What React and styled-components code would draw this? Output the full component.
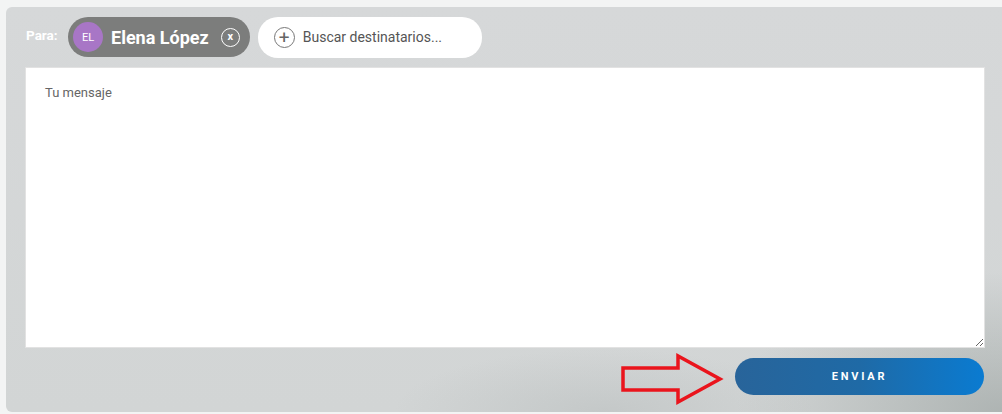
import React from 'react';
import styled, { createGlobalStyle } from 'styled-components';

const Global = createGlobalStyle`
  html, body {
    margin: 0;
    background: #f3f4f4;
    font-family: Roboto, "Liberation Sans", Arial, sans-serif;
    overflow: hidden;
  }
`;

const Panel = styled.div`
  box-sizing: border-box;
  margin: 7px 0 0 6px;
  padding: 10px 17px 18px 19px;
  border-radius: 6px 0 0 6px;
  height: 405px;
  display: flex;
  flex-direction: column;
  background:
    radial-gradient(ellipse 380px 200px at 100% 100%, rgba(150, 158, 156, 0.6), rgba(150, 158, 156, 0) 70%),
    radial-gradient(ellipse 300px 90px at 60% 100%, rgba(170, 176, 176, 0.35), rgba(170, 176, 176, 0) 70%),
    linear-gradient(180deg, #d6d8d9 0%, #d2d5d5 100%);
`;

const Header = styled.div`
  display: flex;
  align-items: center;
  gap: 8px;
  height: 40px;
  margin-bottom: 10px;
  flex-shrink: 0;
`;

const Label = styled.span`
  color: #fff;
  font-weight: 700;
  font-size: 13.5px;
  margin: 0 0 4px 1px;
  width: 34px;
`;

const Chip = styled.div`
  display: flex;
  align-items: center;
  height: 40px;
  box-sizing: border-box;
  padding: 0 10px 0 5px;
  border-radius: 20px;
  background: #7c7d7c;
`;

const Avatar = styled.span`
  width: 30px;
  height: 30px;
  border-radius: 50%;
  background: #a876c6;
  color: #fff;
  font-size: 11px;
  display: flex;
  align-items: center;
  justify-content: center;
  margin-right: 8px;
`;

const Name = styled.span`
  color: #fff;
  font-weight: 700;
  font-size: 18px;
  margin-right: 12px;
`;

const Close = styled.span`
  box-sizing: border-box;
  width: 19px;
  height: 19px;
  border-radius: 50%;
  border: 1px solid #fff;
  color: #fff;
  font-size: 11px;
  font-weight: 700;
  display: flex;
  align-items: center;
  justify-content: center;
  line-height: 1;
  padding-bottom: 2px;
`;

const Search = styled.div`
  display: flex;
  align-items: center;
  width: 224px;
  height: 41px;
  box-sizing: border-box;
  padding-left: 16px;
  border-radius: 20px;
  background: #fff;
`;

const Plus = styled.span`
  box-sizing: border-box;
  width: 21px;
  height: 21px;
  border-radius: 50%;
  border: 1px solid #777;
  color: #666;
  font-size: 19px;
  font-weight: 400;
  display: flex;
  align-items: center;
  justify-content: center;
  line-height: 1;
  margin-right: 8px;
`;

const SearchText = styled.span`
  color: #555;
  font-size: 14px;
`;

const Message = styled.textarea`
  box-sizing: border-box;
  flex-shrink: 0;
  width: 100%;
  height: 281px;
  padding: 17px 19px;
  border: 1px solid #e2e2e2;
  background: #fff;
  font-family: Roboto, "Liberation Sans", Arial, sans-serif;
  font-size: 13px;
  color: #333;
  outline: none;
  resize: vertical;
  display: block;

  &::placeholder {
    color: #666;
  }
`;

const Footer = styled.div`
  display: flex;
  justify-content: flex-end;
  align-items: center;
  gap: 9px;
  margin-top: 8px;
  padding-right: 1px;
`;

const Send = styled.button`
  width: 249px;
  height: 37px;
  border: none;
  border-radius: 19px;
  background: linear-gradient(90deg, #28649a 0%, #1f6aa6 50%, #0a7bd1 100%);
  color: #fff;
  font-family: Roboto, "Liberation Sans", Arial, sans-serif;
  font-size: 11px;
  font-weight: 700;
  letter-spacing: 2.8px;
  cursor: pointer;
`;

const ArrowSvg = styled.svg`
  display: block;
  margin: -3px 0 -9px;
`;

const Arrow = () => (
  <ArrowSvg width="106" height="52" viewBox="0 0 106 52">
    <path
      d="M3 15 H58 V3 L100 26 L58 49 V37 H3 Z"
      fill="none"
      stroke="#ea141c"
      strokeWidth="3.5"
      strokeLinejoin="miter"
    />
  </ArrowSvg>
);

export default function App() {
  return (
    <>
      <Global />
      <Panel>
        <Header>
          <Label>Para:</Label>
          <Chip>
            <Avatar>EL</Avatar>
            <Name>Elena López</Name>
            <Close>x</Close>
          </Chip>
          <Search>
            <Plus>+</Plus>
            <SearchText>Buscar destinatarios...</SearchText>
          </Search>
        </Header>
        <Message placeholder="Tu mensaje" />
        <Footer>
          <Arrow />
          <Send>ENVIAR</Send>
        </Footer>
      </Panel>
    </>
  );
}
